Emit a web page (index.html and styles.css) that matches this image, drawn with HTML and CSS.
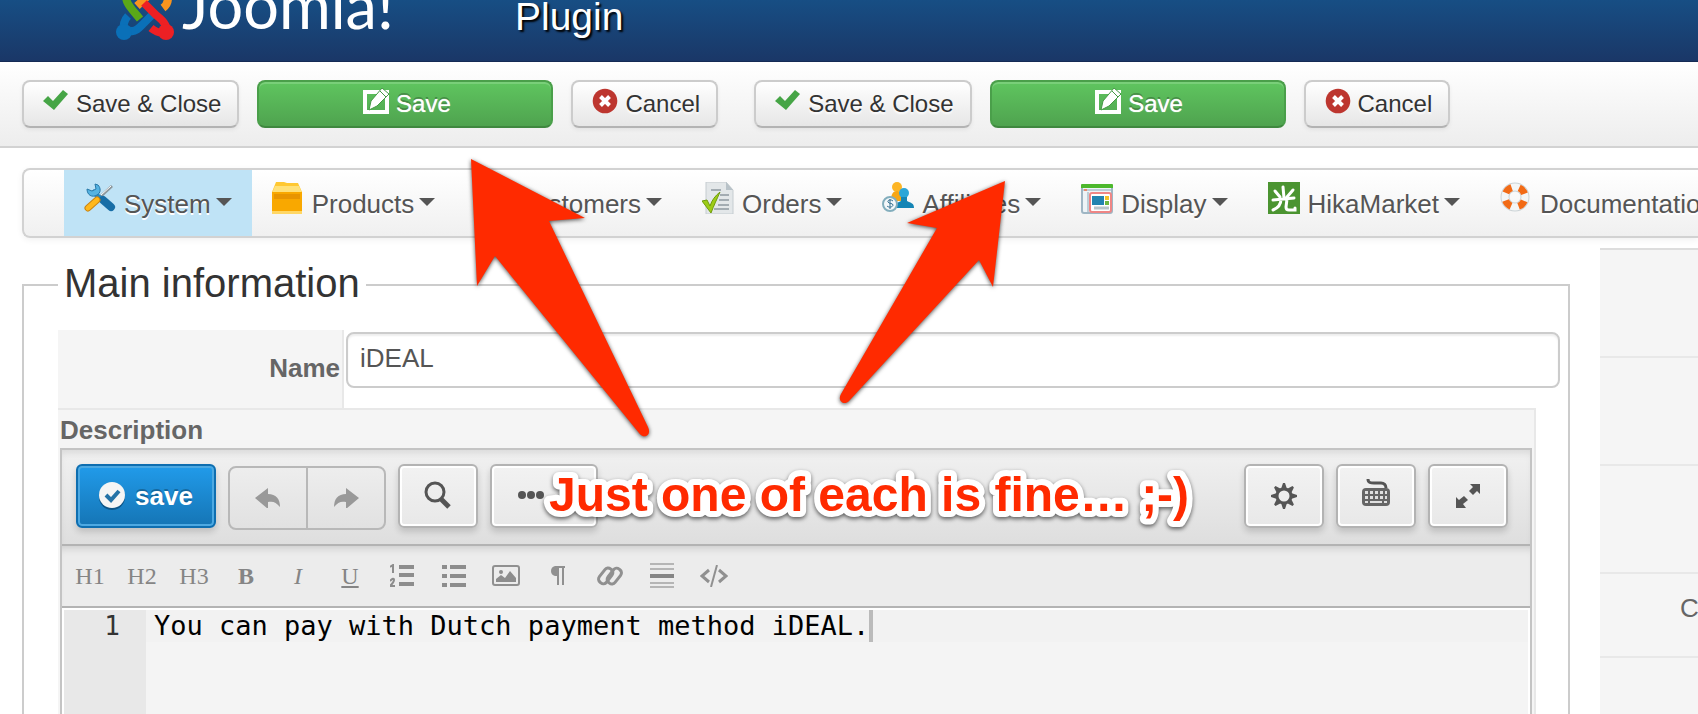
FILE: index.html
```html
<!DOCTYPE html>
<html lang="en">
<head>
  <meta charset="UTF-8">
  <meta name="viewport" content="width=device-width, initial-scale=1.0">
  <title>Joomla! - Plugin</title>
  <link rel="stylesheet" href="styles.css">
</head>
<body>
  <!-- shared icons -->
  <svg width="0" height="0" class="sprite">
    <symbol id="i-check" viewBox="0 0 26 26"><path d="M0 13l5-5 5 5L20 2l5 4-14 16z" fill="#46a546"/></symbol>
    <symbol id="i-edit" viewBox="0 0 26 26"><path d="M2 4h22v20H2z" fill="none" stroke="#fff" stroke-width="4"/><path d="M19 0l7 6-12 12-8 4 2-9z" fill="#fff" stroke="#459a45" stroke-width="1"/><path d="M17 3l6 6" stroke="#459a45"/></symbol>
    <symbol id="i-cancel" viewBox="0 0 26 26"><circle cx="13" cy="13" r="12.3" fill="#bd362f"/><path d="M8.500 8.500l9 9M17.500 8.500l-9 9" stroke="#fff" stroke-width="4"/></symbol>
  </svg>

  <div class="page">
    <header class="header">
      <a class="brand" href="#" aria-label="Joomla!">
        <svg class="logo" width="60" height="42" viewBox="0 0 60 42" fill="none" stroke-width="8">
          <path d="M51 -6c2 6 0 11-4 14M21 6L35 -7" stroke="#f9941e"/>
          <path d="M8 32c-1-6 0-12 4-16M8 33l7-2c5 1 9-4 13-8l9-9" stroke="#0a70b8"/>
          <path d="M28 3l12 12c6 5 11 9 11 17M50 32c-5 2-10 0-15-4" stroke="#ed2024"/>
          <path d="M10 -6c-1 9 5 14 14 25" stroke="#5aa818"/>
          <circle cx="8" cy="32" r="8" fill="#0a70b8"/>
          <circle cx="50" cy="32" r="8" fill="#ed2024"/>
        </svg>
        <span class="brand-name">Joomla!</span>
      </a>
      <h1 class="page-title">Plugin</h1>
    </header>

    <div class="toolbar">
      <div class="btn-group">
        <button class="btn"><svg class="btn-icon lift"><use href="#i-check"/></svg>Save &amp; Close</button>
        <button class="btn btn-success"><svg class="btn-icon lift"><use href="#i-edit"/></svg>Save</button>
        <button class="btn"><svg class="btn-icon lift"><use href="#i-cancel"/></svg>Cancel</button>
      </div>
      <div class="btn-group">
        <button class="btn"><svg class="btn-icon lift"><use href="#i-check"/></svg>Save &amp; Close</button>
        <button class="btn btn-success"><svg class="btn-icon lift"><use href="#i-edit"/></svg>Save</button>
        <button class="btn"><svg class="btn-icon lift"><use href="#i-cancel"/></svg>Cancel</button>
      </div>
    </div>

    <nav class="menu">
      <a class="menu-item active" href="#">
        <svg viewBox="0 0 32 32"><path d="M28 4L16 15" stroke="#8d979c" stroke-width="3"/><path d="M27 4L17 13" stroke="#fff" stroke-width="1"/><path d="M8 9l17 15" stroke="#2489c4" stroke-width="5"/><path d="M3 7c0 6 5 9 10 6 4-2 4-7 1-10l-3-1 1 5-4 2z" fill="#55b3e2" stroke="#2878a8"/><path d="M19 18l8 7" stroke="#176da6" stroke-width="8" stroke-linecap="round"/><path d="M13 18l-9 8" stroke="#c98312" stroke-width="7" stroke-linecap="round"/><path d="M13 18l-9 8" stroke="#ffb81c" stroke-width="5" stroke-linecap="round"/></svg>
        <span>System</span><i class="caret"></i>
      </a>
      <a class="menu-item" href="#">
        <svg viewBox="0 0 32 32"><path d="M2 5l2-5h8l3 1h11l4 9H0z" fill="#ffc832"/><path d="M3 4h24l3 7H0z" fill="#ffe178"/><path d="M0 10h30v22H0z" fill="#f9a800"/><path d="M2 12h26v5H2z" fill="#e89500"/><path d="M0 29h30v3H0z" fill="#ffd765"/></svg>
        <span>Products</span><i class="caret"></i>
      </a>
      <a class="menu-item" href="#">
        <svg viewBox="0 0 32 32"><circle cx="16" cy="9" r="7" fill="#f8b326"/><path d="M3 30c0-10 5-14 13-14s13 4 13 14z" fill="#2c9bd0"/></svg>
        <span>Customers</span><i class="caret"></i>
      </a>
      <a class="menu-item" href="#">
        <svg viewBox="0 0 32 32"><path d="M4 0h20l7 8v24H4z" fill="#e3e7e9" stroke="#c5ccd0"/><path d="M24 0v8h7z" fill="#b8c2c8"/><path d="M9 8h10M18 13h9M17 18h10M16 23h11M12 27h15" stroke="#a3acb2" stroke-width="2"/><path d="M0 19l5-1 3 6c2-6 5-10 10-14-3 7-6 13-9 21z" fill="#9dcc17" stroke="#6f9c0c"/></svg>
        <span>Orders</span><i class="caret"></i>
      </a>
      <a class="menu-item" href="#">
        <svg viewBox="0 0 32 32"><circle cx="15" cy="5" r="5" fill="#fdb525"/><path d="M9 19c0-7 2-10 6-10s6 3 6 10z" fill="#f7a614"/><circle cx="22" cy="11" r="5" fill="#2ba6d8"/><path d="M13 26c0-5 2-5 6-7v-4h6v4c4 2 7 2 7 7z" fill="#1585b5"/><circle cx="8" cy="22" r="7" fill="#f4f8fa" stroke="#83aebd" stroke-width="2"/><path d="M11 19c-2-2-6-1-5 1s5 1 5 3-4 3-6 1M8 17v10" fill="none" stroke="#336f91"/></svg>
        <span>Affiliates</span><i class="caret"></i>
      </a>
      <a class="menu-item" href="#">
        <svg viewBox="0 0 32 32"><rect x="1" y="3" width="30" height="28" rx="2" fill="#eef4f7" stroke="#9fb6c4" stroke-width="2"/><path d="M0 6V3q0-1 1-1h30q1 0 1 1v3z" fill="#4cb82c"/><path d="M2 8h28" stroke="#bcced8" stroke-width="2"/><path d="M3 8h3" stroke="#e68b70" stroke-width="2"/><path d="M7 10v20" stroke="#bcced8" stroke-width="2"/><rect x="9" y="11" width="21" height="19" rx="2" fill="#fff" stroke="#ef8685" stroke-width="2"/><path d="M11 14h12v9H11z" fill="#2283b0"/><path d="M24 14h4v4h-4z" fill="#f4c329"/><path d="M24 19h4v4h-4z" fill="#6cb83f"/><path d="M13 26h15" stroke="#b8c4cb" stroke-width="3"/></svg>
        <span>Display</span><i class="caret"></i>
      </a>
      <a class="menu-item" href="#">
        <svg viewBox="0 0 32 32"><path d="M0 0h32v32H0z" fill="#4b9431"/><path d="M15 5l1 11M7 9l5 6M25 8l-6 7M5 18l21-2M13 17c0 5-3 9-8 11M19 17l-1 8q0 3 3 3h6v-2" fill="none" stroke="#fff" stroke-width="3" stroke-linecap="round"/></svg>
        <span>HikaMarket</span><i class="caret"></i>
      </a>
      <a class="menu-item" href="#">
        <svg viewBox="0 0 32 32"><circle cx="15" cy="15" r="10" fill="none" stroke="#cbd3d6" stroke-width="9"/><circle cx="15" cy="15" r="10" fill="none" stroke="#f4f6f6" stroke-width="7"/><circle cx="15" cy="15" r="10" fill="none" stroke="#f26b16" stroke-width="7" stroke-dasharray="8 7.700" stroke-dashoffset="-4"/></svg>
        <span>Documentation</span><i class="caret"></i>
      </a>
    </nav>

    <main class="content">
      <fieldset class="panel">
        <legend>Main information</legend>
        <div class="row">
          <label class="row-label" for="name">Name</label>
          <input class="row-input" id="name" type="text" value="iDEAL">
        </div>
        <div class="description">
          <label class="description-label" for="code">Description</label>
          <div class="editor">
            <div class="editor-bar">
              <button class="tool tool-save">
                <svg width="26" height="28" viewBox="0 0 26 28"><circle cx="13" cy="15" r="13" fill="#0d5587"/><circle cx="13" cy="13" r="13" fill="#f5f5f5"/><path d="M7 13l5 5 8-9" fill="none" stroke="#2472a6" stroke-width="4"/></svg>
                save
              </button>
              <div class="tool-pair">
                <button aria-label="Undo"><svg width="26" height="20" viewBox="0 0 26 20"><path d="M0 10L13 0v6c8 0 12 5 12 13-4-5-7-6-12-5v7z" fill="#999"/></svg></button>
                <button aria-label="Redo"><svg width="26" height="20" viewBox="0 0 26 20"><path d="M26 10L13 0v6C5 6 1 11 1 19c4-5 7-6 12-5v7z" fill="#999"/></svg></button>
              </div>
              <button class="tool" aria-label="Find"><svg width="28" height="30" viewBox="0 0 28 30"><circle cx="11" cy="11" r="9" fill="none" stroke="#555" stroke-width="3"/><path d="M17 18l8 8" stroke="#555" stroke-width="5"/></svg></button>
              <button class="tool tool-more" aria-label="More"><svg width="28" height="10" viewBox="0 0 28 10" fill="#555"><circle cx="5" cy="4" r="4"/><circle cx="14" cy="4" r="4"/><circle cx="23" cy="4" r="4"/></svg></button>
              <span class="spacer"></span>
              <button class="tool" aria-label="Settings"><svg width="28" height="28" viewBox="0 0 28 28"><circle cx="14" cy="14" r="7" fill="none" stroke="#555" stroke-width="3"/><g fill="#555"><path id="ray" d="M11 7l2-6h2l2 6z"/><use href="#ray" transform="rotate(45 14 14)"/><use href="#ray" transform="rotate(90 14 14)"/><use href="#ray" transform="rotate(135 14 14)"/><use href="#ray" transform="rotate(180 14 14)"/><use href="#ray" transform="rotate(225 14 14)"/><use href="#ray" transform="rotate(270 14 14)"/><use href="#ray" transform="rotate(315 14 14)"/></g></svg></button>
              <button class="tool" aria-label="Keyboard"><svg class="lift" width="28" height="28" viewBox="0 0 28 28"><path d="M6 0c0 4 3 4 6 4h7c3 0 5 2 5 5" fill="none" stroke="#555" stroke-width="3"/><rect y="9" width="28" height="18" rx="4" fill="#666"/><path d="M3 12h3v3H3zM8 12h3v3H8zM13 12h3v3h-3zM18 12h3v3h-3zM23 12h2v3h-2zM3 17h3v3H3zM8 17h3v3H8zM13 17h3v3h-3zM18 17h3v3h-3zM23 17h2v3h-2zM3 22h3v2H3zM8 22h12v2H8zM22 22h3v2h-3z" fill="#e0e0e0"/></svg></button>
              <button class="tool" aria-label="Fullscreen"><svg width="26" height="26" viewBox="0 0 26 26" fill="#555"><path d="M15 1h10v10l-3-3-4 4-4-4 4-4zM1 25V14l3 3 5-4 4 4-5 4 3 4z"/></svg></button>
            </div>
            <div class="format-bar">
              <button>H1</button>
              <button>H2</button>
              <button>H3</button>
              <button><b>B</b></button>
              <button><i>I</i></button>
              <button><u>U</u></button>
              <button aria-label="Ordered list"><svg width="24" height="24" viewBox="0 0 24 24"><path d="M9 3h15M9 11h15M9 20h15" stroke="#8d8d8d" stroke-width="4"/><path d="M0 3l3-2v8M0 17q4-4 4-1 0 2-4 6h5" fill="none" stroke="#8d8d8d" stroke-width="2"/></svg></button>
              <button aria-label="Bullet list"><svg width="24" height="24" viewBox="0 0 24 24"><path d="M0 3h5M8 3h16M0 12h5M8 12h16M0 21h5M8 21h16" stroke="#8d8d8d" stroke-width="4"/></svg></button>
              <button aria-label="Image"><svg width="28" height="22" viewBox="0 0 28 22"><rect x="1" y="1" width="26" height="19" rx="2" fill="none" stroke="#909090" stroke-width="2"/><path d="M4 17v-3l5-4 4 3 5-7 6 7v4z" fill="#8d8d8d"/><circle cx="9" cy="7" r="2" fill="#8d8d8d"/></svg></button>
              <button aria-label="Paragraph"><svg width="14" height="20" viewBox="0 0 14 20"><path d="M6 0h8v2h-1v17h-2V2H8v17H6v-9H4Q0 9 0 5t4-5z" fill="#909090"/></svg></button>
              <button aria-label="Link"><svg width="28" height="22" viewBox="0 0 28 22" fill="none" stroke="#909090" stroke-width="3"><rect x="1" y="7" width="17" height="9" rx="4" transform="rotate(-52 9 11)"/><rect x="10" y="6" width="17" height="9" rx="4" transform="rotate(-52 19 11)"/></svg></button>
              <button aria-label="Horizontal rule"><svg width="24" height="26" viewBox="0 0 24 26"><path d="M0 1h24M0 6h24M0 20h24M0 24h24" stroke="#b5b5b5" stroke-width="2"/><path d="M0 13h24" stroke="#858585" stroke-width="4"/></svg></button>
              <button aria-label="Source"><svg width="28" height="22" viewBox="0 0 28 22" fill="none" stroke="#909090" stroke-width="3"><path d="M9 5l-7 6 7 6M19 5l7 6-7 6"/><path d="M17 0l-6 22" stroke-width="2"/></svg></button>
            </div>
            <div class="code">
              <div class="gutter">1</div>
              <div class="code-line">
                <textarea id="code" rows="1" cols="44" wrap="off" spellcheck="false">You can pay with Dutch payment method iDEAL.</textarea>
                <span class="cursor"></span>
              </div>
            </div>
          </div>
        </div>
      </fieldset>

      <aside class="side">
        <div class="side-row"></div>
        <div class="side-row"></div>
        <div class="side-row"></div>
        <div class="side-row short">C</div>
        <div class="side-row"></div>
      </aside>
    </main>

    <!-- callout drawn over the page -->
    <svg class="callout" width="750" height="390" viewBox="470 150 750 390">
      <path d="M471 159L585 218l-36 3L648 427c4 8-4 13-9 6L495 256l-18 30z"/>
      <path d="M1005 181l-12 106-14-27L849 401c-5 5-12 0-8-7l96-166-30-5z"/>
      <text x="549" y="511">Just one of each is fine… ;-)</text>
    </svg>
  </div>
</body>
</html>
```
FILE: styles.css
```css
* { box-sizing: border-box; }
body { margin: 0; background: #fff; color: #555; font-family: "Liberation Sans", Arial, sans-serif; font-size: 26px; }
button, input, textarea { font-family: inherit; margin: 0; }
button { cursor: pointer; }
svg { display: block; flex: none; }
.sprite { position: absolute; }
.page { position: relative; height: 100vh; overflow: hidden; }

.header { display: flex; align-items: flex-start; height: 62px; padding-left: 116px; overflow: hidden; background: linear-gradient(#174e84, #1a3767); border-bottom: 1px solid #152b55; }
.brand { display: flex; width: 399px; gap: 6px; color: #fff; text-decoration: none; }
.logo { height: 42px; }
.brand-name { font-family: Lato, sans-serif; font-size: 63px; line-height: 10px; }
.page-title { margin: 0; color: #fff; font-size: 39px; font-weight: normal; line-height: 34px; text-shadow: 2px 2px 2px #000; }

.toolbar { display: flex; gap: 36px; padding: 18px 22px; background: linear-gradient(#fff, #ededed); border-bottom: 2px solid #d2d2d2; }
.btn-group { display: flex; gap: 18px; }
.btn { display: flex; align-items: center; justify-content: center; gap: 7px; height: 48px; padding: 0 16px 0 19px; border: 2px solid #ccc; border-bottom-color: #b3b3b3; border-radius: 8px; background: linear-gradient(#fff, #e6e6e6); box-shadow: 0 2px 4px rgba(0,0,0,0.06); color: #333; font-size: 24px; white-space: nowrap; text-shadow: 0 2px 2px #fff; }
.btn-icon { width: 26px; height: 26px; }
.lift { margin-bottom: 6px; }
.btn-success { width: 296px; color: #fff; border-color: #4a9f4a; border-bottom-color: #3f883f; background: linear-gradient(#5fc55f, #4fa34f); box-shadow: inset 0 2px 0 #79cf79; text-shadow: 0 -2px 0 rgba(0,0,0,0.25), 0 0 1px #fff; }

.menu { display: flex; margin: 20px 0 0 22px; padding-left: 40px; border: 2px solid #d2d2d2; border-right: 0; border-radius: 8px 0 0 8px; background: linear-gradient(#fff, #f0f0f0); box-shadow: 0 2px 6px rgba(0,0,0,0.06); }
.menu-item { display: flex; flex: none; align-items: flex-start; padding: 12px 20px 10px; color: #555; line-height: 44px; text-decoration: none; text-shadow: 0 2px 0 #fff; }
.menu-item svg { width: 32px; height: 32px; margin-right: 8px; }
.menu-item.active { background: #bfe3f6; }
.caret { margin: 16px 0 0 5px; border: 8px solid transparent; border-top-color: #555; border-bottom: 0; }

.content { display: grid; grid-template-columns: minmax(0, 1fr) 98px; gap: 30px; padding: 10px 0 0 22px; }
.panel { min-width: 0; margin: 17px 0 0; padding: 25px 8px 40px 34px; border: 2px solid #ccc; }
.panel legend { padding: 0 6px 4px; color: #333; font-size: 40px; line-height: 36px; }
.row { display: flex; align-items: stretch; height: 78px; }
.row-label { display: flex; align-items: center; justify-content: flex-end; width: 286px; padding: 0 2px 2px 0; background: #f5f5f5; border-right: 2px solid #e8e8e8; color: #666; font-weight: bold; }
.row-input { flex: 1; min-width: 0; height: 56px; margin: 2px 0 0 2px; padding: 0 12px 4px; border: 2px solid #ccc; border-radius: 8px; color: #555; font-size: 26px; box-shadow: inset 0 2px 2px rgba(0,0,0,0.07); }
.description { margin-right: 24px; padding-right: 2px; padding-left: 2px; background: #f5f5f5; border-top: 2px solid #e8e8e8; border-right: 2px solid #e8e8e8; }
.description-label { display: block; padding: 3px 0 1px; color: #666; font-weight: bold; line-height: 34px; }

.editor { border: 2px solid #c4c4c4; }
.editor-bar { display: flex; gap: 12px; height: 96px; padding: 14px 22px 0 14px; background: linear-gradient(#f1f1f1, #dedede); border-bottom: 2px solid #b3b3b3; box-shadow: inset 0 6px 8px -4px rgba(0,0,0,0.12); }
.tool { display: flex; align-items: center; justify-content: center; width: 80px; height: 64px; padding: 0; border: 2px solid #b3b3b3; border-radius: 6px; background: linear-gradient(#f2f2f2, #e8e8e8); box-shadow: inset 0 0 0 2px #fff, 0 4px 6px rgba(0,0,0,0.15); }
.tool-more { width: 108px; padding-right: 26px; }
.tool-save { gap: 10px; width: 140px; border-color: #0e6eb0; background: linear-gradient(#219bea, #1575b5); box-shadow: inset 0 0 0 2px #4da9e2, 0 4px 6px rgba(0,0,0,0.15); color: #fff; font-size: 26px; font-weight: bold; text-shadow: 0 -2px 0 rgba(0,0,0,0.25); }
.tool-pair { display: flex; width: 158px; height: 64px; margin-top: 2px; border: 2px solid #b8b8b8; border-radius: 8px; }
.tool-pair button { display: flex; flex: 1; align-items: center; justify-content: center; padding: 0; border: 0; background: none; }
.tool-pair button + button { border-left: 2px solid #b8b8b8; }
.spacer { flex: 1; }
.format-bar { display: flex; height: 62px; padding-left: 2px; background: #ececec; border-bottom: 2px solid #b3b3b3; box-shadow: inset 0 8px 8px -6px rgba(0,0,0,0.15); }
.format-bar button { display: flex; align-items: center; justify-content: center; width: 52px; padding: 0; border: 0; background: none; color: #858585; font-family: "Liberation Serif", serif; font-size: 24px; }
.code { display: flex; min-height: 140px; padding: 2px 2px 0; background: #f4f4f4; box-shadow: inset 0 0 0 2px #fff; }
.gutter { width: 82px; padding-right: 26px; background: #e8e8e8; color: #333; text-align: right; font-family: "DejaVu Sans Mono", monospace; line-height: 32px; }
.code-line { display: flex; flex: 1; height: 32px; padding-left: 8px; background: #f2f2f2; }
.code-line textarea { width: 44ch; height: 32px; padding: 0; border: 0; outline: 0; resize: none; overflow: hidden; background: none; color: #000; font: 27px/32px "DejaVu Sans Mono", monospace; }
.cursor { width: 4px; height: 32px; background: #bbb; }

.side { border-top: 2px solid #ddd; background: #f5f5f5; color: #666; }
.side-row { height: 108px; border-bottom: 2px solid #e8e8e8; }
.side-row.short { height: 84px; padding-left: 80px; line-height: 68px; overflow: hidden; }

.callout { position: absolute; top: 150px; left: 470px; overflow: visible; fill: #ff2a00; pointer-events: none; }
.callout path { filter: drop-shadow(0 1px 2px rgba(0,0,0,0.7)); }
.callout text { font-size: 48px; font-weight: bold; stroke: #fff; stroke-width: 12px; stroke-linejoin: round; paint-order: stroke fill; filter: drop-shadow(0 2px 2px rgba(0,0,0,0.6)); }
```
